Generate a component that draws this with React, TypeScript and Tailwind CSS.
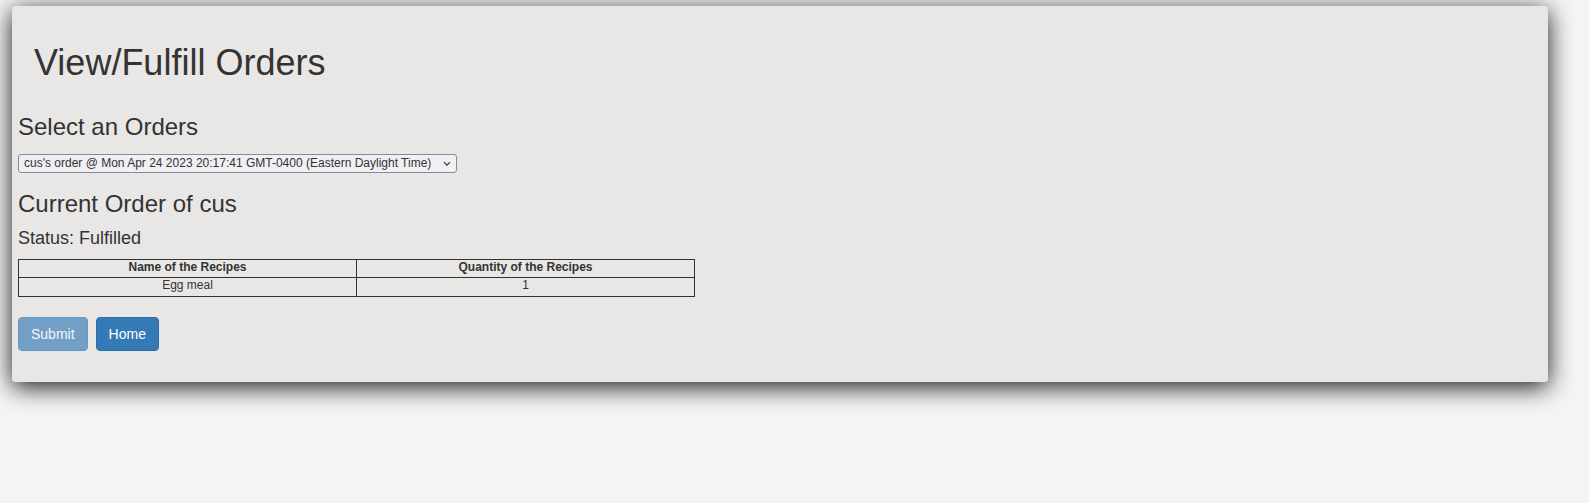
import React from "react";

export default function App() {
  return (
    <div className="min-h-[503px] w-full bg-[#f4f4f4] pt-[6px] font-['Liberation_Sans',Arial,sans-serif] text-[#333333]">
      <div className="ml-[12px] w-[1536px] rounded-[3px] bg-[#e8e7e5] px-[6px] pt-[37px] pb-[31px] shadow-[0_5px_24px_rgba(0,0,0,0.9)]">
        <h1 className="ml-[16px] text-[36px] leading-[39.6px] font-normal">View/Fulfill Orders</h1>
        <h3 className="mt-[31px] text-[24px] leading-[26.4px] font-normal">Select an Orders</h3>
        <div className="relative mt-[13.5px] h-[19px] w-[439px]">
          <select
            defaultValue="o1"
            className="block h-[19px] w-[439px] appearance-none rounded-[3px] border border-[#8a8a94] bg-[#efeff4] pl-[5px] pr-[20px] text-[12px] leading-[15px] text-[#333333] outline-none"
          >
            <option value="o1">cus's order @ Mon Apr 24 2023 20:17:41 GMT-0400 (Eastern Daylight Time)</option>
          </select>
          <svg
            className="pointer-events-none absolute right-[6px] top-[7px]"
            width="8"
            height="6"
            viewBox="0 0 8 6"
            fill="none"
          >
            <path d="M1 1.2L4 4.2L7 1.2" stroke="#333" strokeWidth="1.2" />
          </svg>
        </div>
        <h3 className="mt-[18px] text-[24px] leading-[26.4px] font-normal">Current Order of cus</h3>
        <div className="mt-[12px] text-[18px] leading-[19.8px]">Status: Fulfilled</div>
        <table className="mt-[10.5px] w-[677px] border-collapse text-[12px] text-[#333333]">
          <thead>
            <tr>
              <th className="w-1/2 border border-[#333333] pt-0 pb-[3px] text-center leading-[14px] font-bold">Name of the Recipes</th>
              <th className="w-1/2 border border-[#333333] pt-0 pb-[3px] text-center leading-[14px] font-bold">Quantity of the Recipes</th>
            </tr>
          </thead>
          <tbody>
            <tr>
              <td className="border border-[#333333] pt-0 pb-[4px] text-center leading-[14px]">Egg meal</td>
              <td className="border border-[#333333] pt-0 pb-[4px] text-center leading-[14px]">1</td>
            </tr>
          </tbody>
        </table>
        <div className="mt-[20px] flex gap-[8px]">
          <button
            disabled
            className="h-[34px] rounded-[4px] border border-[#2e6da4] bg-[#337ab7] px-[12px] text-[14px] text-white opacity-65"
          >
            Submit
          </button>
          <button className="h-[34px] rounded-[4px] border border-[#2e6da4] bg-[#337ab7] px-[12px] text-[14px] text-white">
            Home
          </button>
        </div>
      </div>
    </div>
  );
}
